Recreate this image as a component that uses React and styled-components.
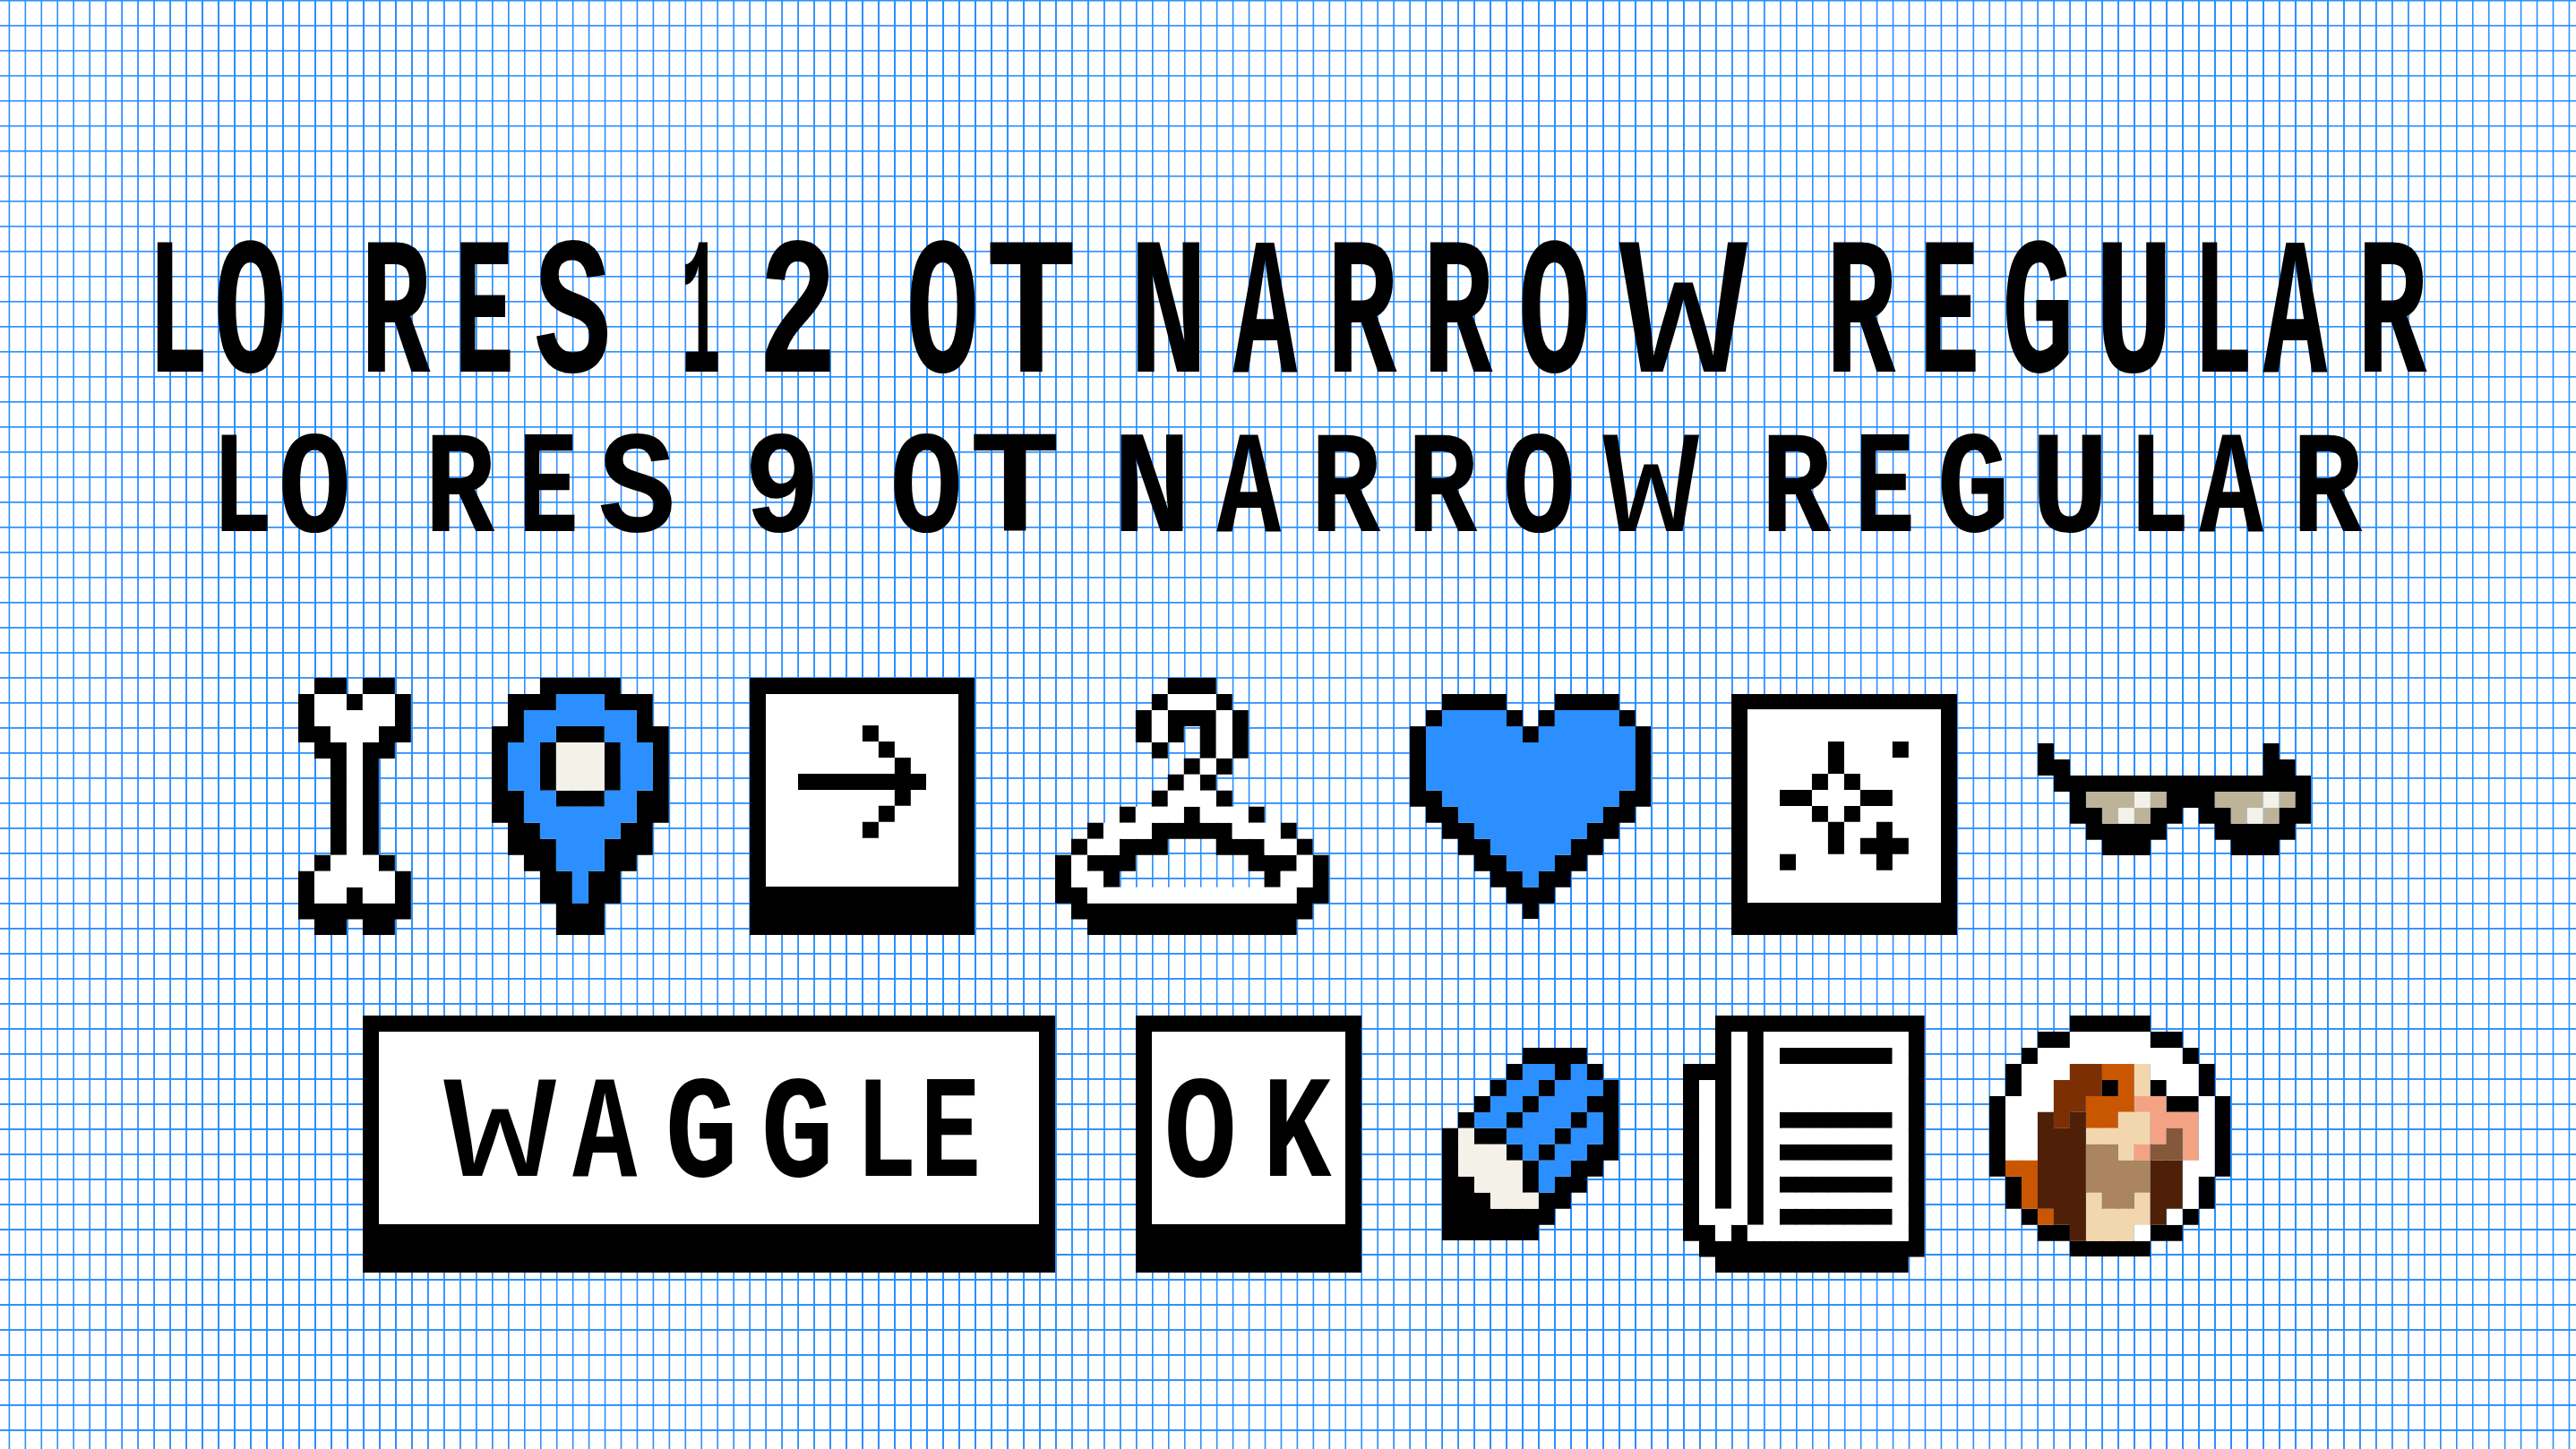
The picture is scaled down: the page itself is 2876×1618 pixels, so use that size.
import React from 'react';
import styled, { createGlobalStyle } from 'styled-components';

// one "fat pixel" of the artwork, the sheet is 160 of them wide
const P = 17.975;
const MONO_ADVANCE = 0.6;

const COLORS = {
  k: '#000000',
  w: '#ffffff',
  b: '#2b8fff',
  c: '#f4f1e9',
  t: '#bdb398',
  d: '#4f1f07',
  m: '#7b2f03',
  o: '#c95600',
  f: '#f2d7ae',
  p: '#f3a384',
  a: '#aa855f',
  u: '#85583a',
};

const BONE = [
  '.kk.kk.',
  'kwwkwwk',
  'kwwwwwk',
  'kkwwwkk',
  '.kkwkk.',
  '..kwk..',
  '..kwk..',
  '..kwk..',
  '..kwk..',
  '..kwk..',
  '..kwk..',
  '.kwwwk.',
  'kwwwwwk',
  'kwwkwwk',
  'kkkkkkk',
  '.kk.kk.',
];

const PIN = [
  '...kkkkk...',
  '.kkkbbbkkk.',
  '.kbbbbbbbk.',
  'kkbbkkkbbkk',
  'kbbkccckbbk',
  'kbbkccckbbk',
  'kbbkccckbbk',
  'kkbbkkkbbkk',
  'kkbbbbbbbkk',
  '.kkbbbbbkk.',
  '.kkkbbbkkk.',
  '..kkbbbkk..',
  '...kkbkk...',
  '...kkbkk...',
  '....kkk....',
  '....kkk....',
];

const ARROW = [
  '....k...',
  '.....k..',
  '......k.',
  'kkkkkkkk',
  '......k.',
  '.....k..',
  '....k...',
];

const HANGER = [
  '.......kkk.......',
  '......kwwwk......',
  '.....kwkkkwk.....',
  '.....kwk.kwk.....',
  '......k..kwk.....',
  '........kwk......',
  '.......kwk.......',
  '......kwwwk......',
  '....kwwwkwwwk....',
  '..kwwwkkkkkwwwk..',
  '.kwwkkk...kkkwwk.',
  'kwkkk.......kkkwk',
  'kwwk.........kwwk',
  'kkwwwwwwwwwwwwwkk',
  '.kkkkkkkkkkkkkkk.',
  '..kkkkkkkkkkkkk..',
];

const HEART = [
  '..kkkk...kkkk..',
  '.kbbbbk.kbbbbk.',
  'kbbbbbbkbbbbbbk',
  'kbbbbbbbbbbbbbk',
  'kbbbbbbbbbbbbbk',
  'kbbbbbbbbbbbbbk',
  'kkbbbbbbbbbbbkk',
  '.kkbbbbbbbbbkk.',
  '..kkbbbbbbbkk..',
  '...kkbbbbbkk...',
  '....kkbbbkk....',
  '.....kkbkk.....',
  '......kkk......',
  '.......k.......',
];

const SPARKLE = [
  '...k...k',
  '...k....',
  '..k.k...',
  'kk...kk.',
  '..k.k...',
  '...k..k.',
  '...k.kkk',
  'k.....k.',
];

const GLASSES = [
  'k.............k..',
  'kk............kk.',
  '.kkkkkkkkkkkkkkkk',
  '..ktttctkkktttctk',
  '..kktctkk.kktctkk',
  '...kkkkk...kkkkk.',
  '....kkk.....kkk..',
];

const ERASER = [
  '.....kkkk..',
  '....kbbkbk.',
  '...kbbkbbbk',
  '..kbbkbbbkk',
  '.kbbkbbbkbk',
  'kckkbbbkbbk',
  'kccckbkbbkk',
  'kcccckbbkk.',
  'kkccckbkk..',
  'kkkccckk...',
  'kkkkkkk....',
  'kkkkkk.....',
];

const NEWSPAPER = [
  '..kkkkkkkkkkkkk',
  '..kwkwwwwwwwwwk',
  '..kwkwkkkkkkkwk',
  'kkkwkwwwwwwwwwk',
  'kwkwkwwwwwwwwwk',
  'kwkwkwwwwwwwwwk',
  'kwkwkwkkkkkkkwk',
  'kwkwkwwwwwwwwwk',
  'kwkwkwkkkkkkkwk',
  'kwkwkwwwwwwwwwk',
  'kwkwkwkkkkkkkwk',
  'kwkwkwwwwwwwwwk',
  'kwwwkwkkkkkkkwk',
  'kkwkwwwwwwwwwwk',
  '.kkkkkkkkkkkkkk',
  '..kkkkkkkkkkkk.',
];

const DOG = [
  '.....kkkkk.....',
  '...kkwwwwwkk...',
  '..kwwwwwwwwwk..',
  '.kwwwmmoofwwwk.',
  '.kwwmmmkofkwwk.',
  'kwwwmmoooppkkwk',
  'kwwdmdooffpppwk',
  'kwwdddffffpupwk',
  'kwwdddaafpuupwk',
  'koodddaaaaddwwk',
  '.kodddaaaaddwk.',
  '.kodddfaafddwk.',
  '..koddffffdwk..',
  '...kkdfffwkk...',
  '.....kkkkk.....',
];

// [character, width in fat pixels, empty fat pixels after it]
const LINE_12 = [
  ['L', 3, 1], ['O', 4, 0], [' ', 5, 0],
  ['R', 4, 2], ['E', 3, 2], ['S', 4, 0], [' ', 5, 0],
  ['1', 2, 3], ['2', 4, 0], [' ', 5, 0],
  ['O', 4, 1], ['T', 5, 0], [' ', 4, 0],
  ['N', 4, 2], ['A', 4, 2], ['R', 4, 2], ['R', 4, 2], ['O', 4, 2], ['W', 8, 0], [' ', 5, 0],
  ['R', 4, 2], ['E', 3, 2], ['G', 4, 2], ['U', 4, 2], ['L', 3, 1], ['A', 4, 2], ['R', 4, 0],
];

const LINE_9 = [
  ['L', 3, 1], ['O', 4, 0], [' ', 5, 0],
  ['R', 4, 2], ['E', 3, 2], ['S', 4, 0], [' ', 5, 0],
  ['9', 4, 0], [' ', 5, 0],
  ['O', 4, 1], ['T', 5, 0], [' ', 4, 0],
  ['N', 4, 2], ['A', 4, 2], ['R', 4, 2], ['R', 4, 2], ['O', 4, 2], ['W', 6, 0], [' ', 4, 0],
  ['R', 4, 2], ['E', 3, 2], ['G', 4, 2], ['U', 4, 2], ['L', 3, 1], ['A', 4, 2], ['R', 4, 0],
];

const WAGGLE = [['W', 7, 1], ['A', 4, 2], ['G', 4, 2], ['G', 4, 2], ['L', 3, 1], ['E', 3, 0]];
const OK = [['O', 4, 2], ['K', 4, 0]];

// rough ink width of each Liberation Mono Bold capital, in em
const INK = { L: 0.47, O: 0.53, R: 0.55, E: 0.48, S: 0.5, '1': 0.48, '2': 0.48, '9': 0.5, T: 0.53, N: 0.49, A: 0.6, W: 0.6, G: 0.53, U: 0.49, K: 0.56, ' ': 0.6 };

const GlobalStyle = createGlobalStyle`
  html, body {
    margin: 0;
    padding: 0;
    background: #fff;
  }
`;

const Sheet = styled.main`
  width: 2876px;
  height: 1618px;
  overflow: hidden;
  box-sizing: border-box;
  padding: 271.5px 0 0 9.8px;
  background-color: #fff;
  background-image:
    repeating-linear-gradient(to right,
      transparent 0, transparent 9.3px, #2b8fff 9.8px, #2b8fff 11.1px, transparent 11.6px, transparent ${P}px),
    repeating-linear-gradient(to bottom,
      #2b8fff 0, #2b8fff 1px, transparent 2px, transparent 27.4px, #8fc2ff 27.7px, #2b8fff 28.01px);
`;

const TextLine = styled.h1`
  margin: ${(p) => p.$top}px 0 0 ${(p) => p.$col * P}px;
  height: ${(p) => p.$rows * P}px;
  font-family: "Liberation Mono", monospace;
  font-weight: 700;
  font-size: ${(p) => p.$rows * P / 0.659}px;
  line-height: ${(p) => 2 * (p.$rows * P - 0.2667 * p.$rows * P / 0.659)}px;
  color: #000;
  white-space: nowrap;
  font-kerning: none;
`;

// the only glyph wider than its stroke allows: bold would clog it
const Glyph = styled.span`
  display: inline-block;
  white-space: pre;
  font-weight: ${(p) => (p.$char === 'W' ? 400 : 700)};
  margin-left: ${(p) => (p.$w * P - MONO_ADVANCE * p.$size) / 2}px;
  margin-right: ${(p) => (p.$w * P - MONO_ADVANCE * p.$size) / 2 + p.$gap * P}px;
  transform: scaleX(${(p) => (p.$w * P) / (INK[p.$char] * p.$size)});
`;

const IconRow = styled.section`
  display: flex;
  align-items: flex-start;
  margin: ${(p) => p.$top}px 0 0 ${(p) => p.$col * P}px;
`;

const Sprite = styled.svg`
  display: block;
  flex: none;
  margin-top: ${(p) => p.$top || 0}px;
  margin-left: ${(p) => (p.$gap || 0) * P}px;
`;

const PixelButton = styled.div`
  flex: none;
  box-sizing: border-box;
  display: flex;
  width: ${(p) => p.$cols * P}px;
  height: ${(p) => p.$rows * P}px;
  margin-top: ${(p) => (p.$top || 0) * P}px;
  margin-left: ${(p) => (p.$gap || 0) * P}px;
  padding: ${P}px ${P}px ${(p) => p.$base * P}px;
  background: #000;
`;

const ButtonFace = styled.div`
  flex: 1;
  display: flex;
  align-items: center;
  justify-content: center;
  box-sizing: border-box;
  padding-bottom: ${(p) => (p.$lift || 0) * P}px;
  background: #fff;
`;

function PixelText({ rows, col = 0, top = 0, glyphs }) {
  const size = (rows * P) / 0.659;
  return (
    <TextLine $rows={rows} $col={col} $top={top}>
      {glyphs.map(([char, w, gap], i) => (
        <Glyph key={i} $char={char} $w={w} $gap={gap} $size={size}>{char}</Glyph>
      ))}
    </TextLine>
  );
}

// every colour goes in one path, so neighbouring runs leave no seams
function PixelArt({ art, gap, top }) {
  const cols = art[0].length;
  const paths = {};
  art.forEach((row, y) => {
    let x = 0;
    while (x < cols) {
      const key = row[x];
      let end = x + 1;
      while (end < cols && row[end] === key) end += 1;
      if (key !== '.') {
        paths[key] = (paths[key] || '') + `M${x} ${y}h${end - x}v1h-${end - x}z`;
      }
      x = end;
    }
  });
  return (
    <Sprite
      $gap={gap}
      $top={top}
      width={cols * P}
      height={art.length * P}
      viewBox={`0 0 ${cols} ${art.length}`}
    >
      {Object.keys(paths).map((key) => (
        <path key={key} d={paths[key]} fill={COLORS[key]} />
      ))}
    </Sprite>
  );
}

export default function App() {
  return (
    <>
      <GlobalStyle />
      <Sheet>
        <PixelText rows={8} col={9} glyphs={LINE_12} />
        <PixelText rows={6} col={13} top={70.4} glyphs={LINE_9} />

        <IconRow $col={18} $top={163}>
          <PixelArt art={BONE} />
          <PixelArt art={PIN} gap={5} />
          <PixelButton $cols={14} $rows={16} $base={3} $gap={5}>
            <ButtonFace $lift={1}>
              <PixelArt art={ARROW} />
            </ButtonFace>
          </PixelButton>
          <PixelArt art={HANGER} gap={5} />
          <PixelArt art={HEART} gap={5} top={P} />
          <PixelButton $cols={14} $rows={15} $base={2} $gap={5} $top={1}>
            <ButtonFace>
              <PixelArt art={SPARKLE} />
            </ButtonFace>
          </PixelButton>
          <PixelArt art={GLASSES} gap={5} top={73} />
        </IconRow>

        <IconRow $col={22} $top={89.7}>
          <PixelButton $cols={43} $rows={16} $base={3}>
            <ButtonFace>
              <PixelText rows={6} glyphs={WAGGLE} />
            </ButtonFace>
          </PixelButton>
          <PixelButton $cols={14} $rows={16} $base={3} $gap={5}>
            <ButtonFace>
              <PixelText rows={6} glyphs={OK} />
            </ButtonFace>
          </PixelButton>
          <PixelArt art={ERASER} gap={5} top={2 * P} />
          <PixelArt art={NEWSPAPER} gap={4} />
          <PixelArt art={DOG} gap={4} />
        </IconRow>
      </Sheet>
    </>
  );
}
